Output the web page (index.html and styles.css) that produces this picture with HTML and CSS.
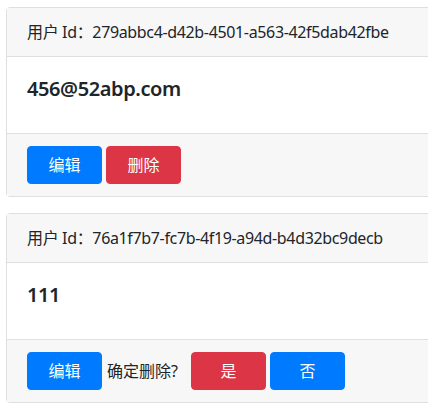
FILE: index.html
```html
<!DOCTYPE html>
<html lang="zh-CN">
  <head>
    <meta charset="UTF-8" />
    <meta name="viewport" content="width=device-width, initial-scale=1.0" />
    <title>用户列表</title>
    <link rel="stylesheet" href="styles.css">
  </head>
  <body>
    <div class="user-list">
      <div class="card">
        <div class="card-header">用户 Id：279abbc4-d42b-4501-a563-42f5dab42fbe</div>
        <div class="card-body">
          <h5 class="card-title">456@52abp.com</h5>
        </div>
        <div class="card-footer">
          <button class="btn btn-primary">编辑</button>
          <button class="btn btn-danger">删除</button>
        </div>
      </div>

      <div class="card">
        <div class="card-header">用户 Id：76a1f7b7-fc7b-4f19-a94d-b4d32bc9decb</div>
        <div class="card-body">
          <h5 class="card-title">111</h5>
        </div>
        <div class="card-footer">
          <button class="btn btn-primary">编辑</button>
          <span class="confirm-text">确定删除?</span>
          <button class="btn btn-danger">是</button>
          <button class="btn btn-primary">否</button>
        </div>
      </div>
    </div>
  </body>
</html>
```

FILE: styles.css
```css
html,
body {
  overflow: hidden;
}
body {
  margin: 0;
  font-family: "Noto Sans", "Noto Sans CJK SC", sans-serif;
  font-size: 16px;
  line-height: 1.5;
  color: #212529;
  background-color: #fff;
}
.user-list {
  padding: 7px 0 0 6px;
}
.card {
  width: 480px;
  margin-bottom: 16px;
  border: 1px solid #dfdfdf;
  border-radius: 4px;
  background-color: #fff;
}
.card-header {
  padding: 12px 20px;
  letter-spacing: -0.35px;
  background-color: #f7f7f7;
  border-bottom: 1px solid #dfdfdf;
}
.card-body {
  padding: 20px;
}
.card-title {
  margin: 0 0 12px;
  font-size: 20px;
  font-weight: 600;
  line-height: 1.2;
  letter-spacing: -0.4px;
}
.card-footer {
  display: flex;
  align-items: center;
  gap: 4px;
  padding: 12px 20px;
  background-color: #f7f7f7;
  border-top: 1px solid #dfdfdf;
}
.btn {
  width: 75px;
  padding: 6px 12px;
  font-family: inherit;
  font-size: 16px;
  line-height: 24px;
  color: #fff;
  border: 1px solid transparent;
  border-radius: 4px;
}
.btn-primary {
  background-color: #007bff;
  border-color: #007bff;
}
.btn-danger {
  background-color: #dc3545;
  border-color: #dc3545;
}
.confirm-text {
  margin: 0 9px 0 1px;
}
```
